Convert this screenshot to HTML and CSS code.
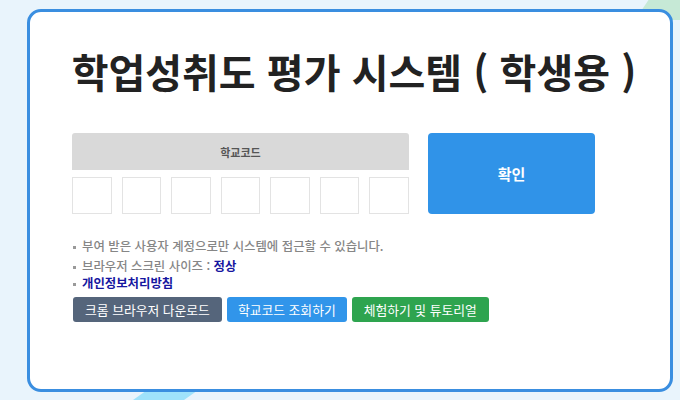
FILE: index.html
```html
<!DOCTYPE html>
<html lang="ko">
<head>
<meta charset="utf-8">
<title>학업성취도 평가 시스템</title>
<link rel="stylesheet" href="styles.css">
</head>
<body>
<div class="deco deco-green"></div>
<div class="deco deco-blue"></div>
<main class="card">
  <h1 class="title">학업성취도 평가 시스템 ( 학생용 )</h1>
  <div class="login-row">
    <div class="code-block">
      <div class="code-label">학교코드</div>
      <div class="code-boxes">
        <input class="code-box" type="text" maxlength="1">
        <input class="code-box" type="text" maxlength="1">
        <input class="code-box" type="text" maxlength="1">
        <input class="code-box" type="text" maxlength="1">
        <input class="code-box" type="text" maxlength="1">
        <input class="code-box" type="text" maxlength="1">
        <input class="code-box" type="text" maxlength="1">
      </div>
    </div>
    <button class="confirm-btn" type="button">확인</button>
  </div>
  <ul class="notes">
    <li class="note note-first">부여 받은 사용자 계정으로만 시스템에 접근할 수 있습니다.</li>
    <li class="note">브라우저 스크린 사이즈 : <span class="link">정상</span></li>
    <li class="note"><span class="link">개인정보처리방침</span></li>
  </ul>
  <div class="actions">
    <button class="btn btn-slate" type="button">크롬 브라우저 다운로드</button>
    <button class="btn btn-blue" type="button">학교코드 조회하기</button>
    <button class="btn btn-green" type="button">체험하기 및 튜토리얼</button>
  </div>
</main>
</body>
</html>
```

FILE: styles.css
```css
html, body {
  margin: 0;
  padding: 0;
}

body {
  width: 680px;
  height: 400px;
  overflow: hidden;
  position: relative;
  background: #e9f4fc;
  font-family: "Noto Sans CJK KR", "Noto Sans", sans-serif;
}

.deco {
  position: absolute;
  z-index: 0;
}

.deco-green {
  right: 0;
  top: 0;
  width: 45px;
  height: 20px;
  background: #c6e9d6;
  clip-path: polygon(30% 0, 100% 0, 100% 100%, 0 100%);
}

.deco-blue {
  left: 133px;
  bottom: 0;
  width: 68px;
  height: 12px;
  background: #9fe2fb;
  clip-path: polygon(25% 0, 100% 0, 75% 100%, 0 100%);
}

.card {
  position: relative;
  z-index: 1;
  box-sizing: border-box;
  margin: 9px 0 0 27px;
  width: 646px;
  height: 383px;
  background: #ffffff;
  border: 3px solid #3a8ee0;
  border-radius: 14px;
  padding: 36px 0 0 42px;
}

.title {
  margin: 0 0 39px -42px;
  font-size: 40px;
  line-height: 46px;
  font-weight: 700;
  color: #222222;
  text-align: center;
  padding-left: 8px;
  white-space: nowrap;
}

.login-row {
  display: flex;
  gap: 19px;
}

.code-block {
  width: 337px;
  display: flex;
  flex-direction: column;
  gap: 7px;
}

.code-label {
  height: 37px;
  background: #d9d9d9;
  border-radius: 3px 3px 0 0;
  color: #555555;
  font-size: 11px;
  font-weight: 700;
  display: flex;
  align-items: center;
  justify-content: center;
}

.code-boxes {
  display: grid;
  grid-template-columns: repeat(7, 1fr);
  gap: 10px;
}

.code-box {
  box-sizing: border-box;
  height: 37px;
  width: 100%;
  margin: 0;
  border: 1px solid #e3e3e3;
  background: #ffffff;
  padding: 0;
}

.confirm-btn {
  width: 167px;
  height: 81px;
  border: none;
  border-radius: 4px;
  background: #3093e8;
  color: #ffffff;
  font-family: inherit;
  font-size: 15px;
  font-weight: 700;
  padding: 0;
}

.notes {
  list-style: none;
  margin: 24px 0 0 0;
  padding: 0;
}

.note {
  font-size: 12.4px;
  line-height: 17px;
  color: #868686;
  font-weight: 500;
  padding-left: 10px;
  position: relative;
}

.note::before {
  content: "";
  position: absolute;
  left: 1px;
  top: 8px;
  width: 3px;
  height: 3px;
  background: #9a9a9a;
}

.note-first {
  margin-bottom: 3px;
}

.link {
  color: #1616a0;
  font-weight: 700;
}

.actions {
  display: flex;
  gap: 5px;
  margin-top: 5px;
  padding-left: 1px;
}

.btn {
  height: 25px;
  border: none;
  border-radius: 3px;
  color: #ffffff;
  font-family: inherit;
  font-size: 12.8px;
  padding: 0 12px;
  line-height: 25px;
}

.btn-slate {
  background: #55657b;
}

.btn-blue {
  background: #3195ea;
  padding: 0 11px;
}

.btn-green {
  background: #2ea44f;
}
```
